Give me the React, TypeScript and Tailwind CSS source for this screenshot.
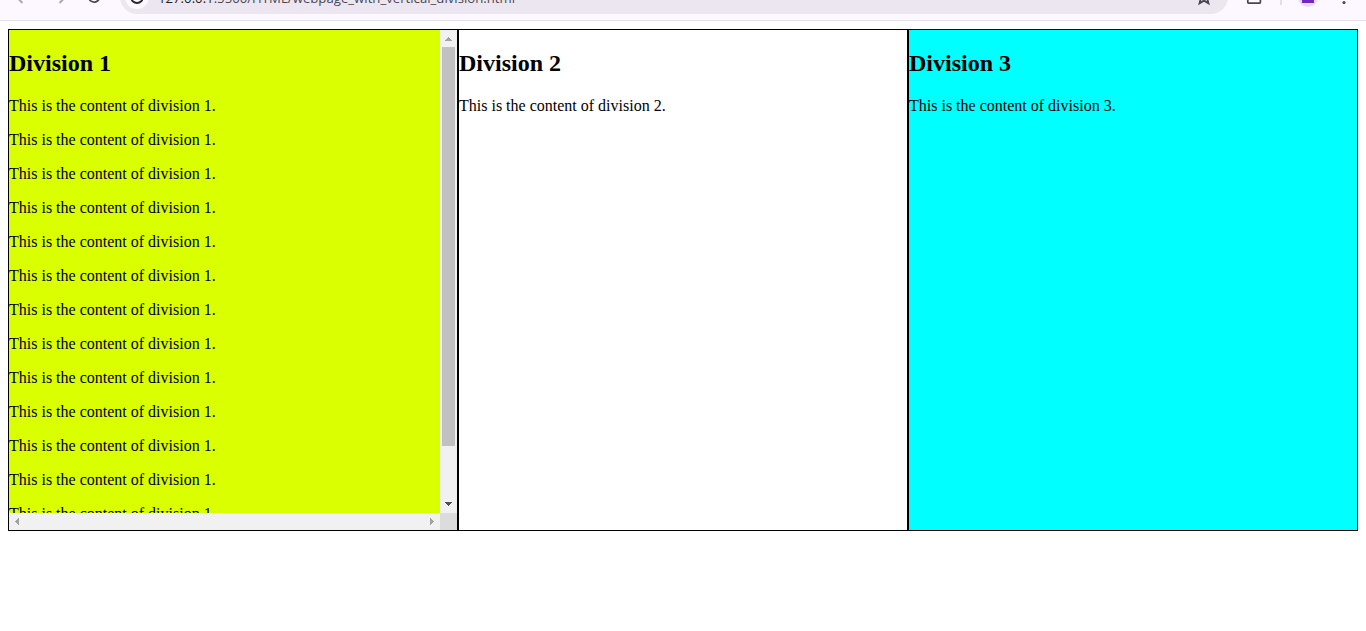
import React from "react";

const lines = Array.from({ length: 13 }, (_, i) => i);

function Toolbar() {
  return (
    <header className="h-[21px] overflow-hidden border-b border-[#e8e0ec] bg-[#fdf7ff]">
      <div className="-mt-5 flex h-[34px] items-center">
        <svg className="ml-[14px] h-4 w-4 shrink-0" viewBox="0 0 16 16" fill="none" stroke="#a8a3ac" strokeWidth="1.8">
          <path d="M8.5 2L2.5 8L8.5 14M2.5 8H14" />
        </svg>
        <svg className="ml-[22px] h-4 w-4 shrink-0" viewBox="0 0 16 16" fill="none" stroke="#a8a3ac" strokeWidth="1.8">
          <path d="M7.5 2L13.5 8L7.5 14M13.5 8H2" />
        </svg>
        <svg className="ml-[18px] h-4 w-4 shrink-0" viewBox="0 0 16 16" fill="none" stroke="#4b4653" strokeWidth="1.8">
          <path d="M13 5A5.5 5.5 0 1 0 13.3 9.5M13.5 1.5V5.5H9.5" />
        </svg>
        <div className="ml-[18px] flex h-[34px] w-[1108px] shrink-0 items-center rounded-full bg-[#ece6f0] pl-[5px]">
          <div className="flex h-6 w-6 items-center justify-center rounded-full bg-[#fdf7ff]">
            <svg className="h-4 w-4" viewBox="0 0 16 16" fill="none" stroke="#2b2730" strokeWidth="1.8">
              <circle cx="8" cy="8" r="6" />
              <path d="M8 7V11M8 4.5V6" />
            </svg>
          </div>
          <span className="ml-[9px] whitespace-nowrap pt-0.5 font-['Open_Sans','Noto_Sans',sans-serif] text-[13.2px] leading-[20px] text-[#4b4653]">
            <span className="text-[#211f26]">127.0.0.1</span>:5500/HTML/webpage_with_vertical_division.html
          </span>
          <svg className="ml-auto mr-[15px] h-[18px] w-[18px]" viewBox="0 0 18 18" fill="none" stroke="#4b4653" strokeWidth="1.9">
            <path d="M9 2L11 7L16 7.4L12.3 10.8L13.4 15.2L9 12.6L4.6 15.2L5.7 10.8L2 7.4L7 7Z" />
          </svg>
        </div>
        <svg className="ml-[18px] h-4 w-4 shrink-0" viewBox="0 0 16 16" fill="none" stroke="#4b4653" strokeWidth="1.7">
          <rect x="1.8" y="1" width="12.6" height="13.2" rx="1" />
        </svg>
        <div className="ml-[18px] h-4 w-0.5 shrink-0 bg-[#e8d9f8]" />
        <div className="ml-4 flex h-5 w-5 shrink-0 items-center justify-center rounded-full bg-[#e8d9f8]">
          <div className="h-3 w-3 bg-[#7627bb]" />
        </div>
        <svg className="ml-[18px] h-4 w-4 shrink-0" viewBox="0 0 16 16" fill="#4b4653">
          <circle cx="8" cy="2.5" r="1.6" />
          <circle cx="8" cy="8" r="1.6" />
          <circle cx="8" cy="13.5" r="1.6" />
        </svg>
      </div>
    </header>
  );
}

function Title({ children }: { children: React.ReactNode }) {
  return <h2 className="my-5 text-2xl font-bold leading-[27px]">{children}</h2>;
}

export default function App() {
  return (
    <div className="h-[631px] overflow-hidden bg-white font-['Liberation_Serif','Times_New_Roman',serif] text-base leading-[18px] text-black">
      <Toolbar />
      <main className="mx-2 mt-2 grid h-[502px] grid-cols-3">
        <section className="grid min-h-0 grid-cols-[431px_17px] grid-rows-[483px_17px] border border-black">
          <div className="flow-root overflow-hidden bg-[#daff00]">
            <Title>Division 1</Title>
            {lines.map((i) => (
              <p key={i} className="mb-4">This is the content of division 1.</p>
            ))}
          </div>
          <div className="flex flex-col items-center bg-[#f1f1f1]">
            <svg className="h-[17px] w-[17px] shrink-0" viewBox="0 0 17 17" fill="#a3a3a3" shapeRendering="crispEdges">
              <path d="M8 7h1v1h1v1h1v1h1v1H5v-1h1V9h1V8h1z" />
            </svg>
            <div className="h-[399px] w-[13px] bg-[#c1c1c1]" />
            <svg className="mt-auto h-[17px] w-[17px] shrink-0" viewBox="0 0 17 17" fill="#505050" shapeRendering="crispEdges">
              <path d="M5 6h7v1h-1v1h-1v1H9v1H8V9H7V8H6V7H5z" />
            </svg>
          </div>
          <div className="flex items-center justify-between bg-[#f1f1f1]">
            <svg className="h-[17px] w-[17px]" viewBox="0 0 17 17" fill="#a3a3a3" shapeRendering="crispEdges">
              <path d="M10 5v7H9v-1H8v-1H7V9H6V8h1V7h1V6h1V5z" />
            </svg>
            <svg className="h-[17px] w-[17px]" viewBox="0 0 17 17" fill="#a3a3a3" shapeRendering="crispEdges">
              <path d="M7 5v7h1v-1h1v-1h1V9h1V8h-1V7H9V6H8V5z" />
            </svg>
          </div>
          <div className="bg-[#dcdcdc]" />
        </section>
        <section className="flow-root border border-black bg-white">
          <Title>Division 2</Title>
          <p>This is the content of division 2.</p>
        </section>
        <section className="flow-root border border-black bg-[#00ffff]">
          <Title>Division 3</Title>
          <p>This is the content of division 3.</p>
        </section>
      </main>
    </div>
  );
}
